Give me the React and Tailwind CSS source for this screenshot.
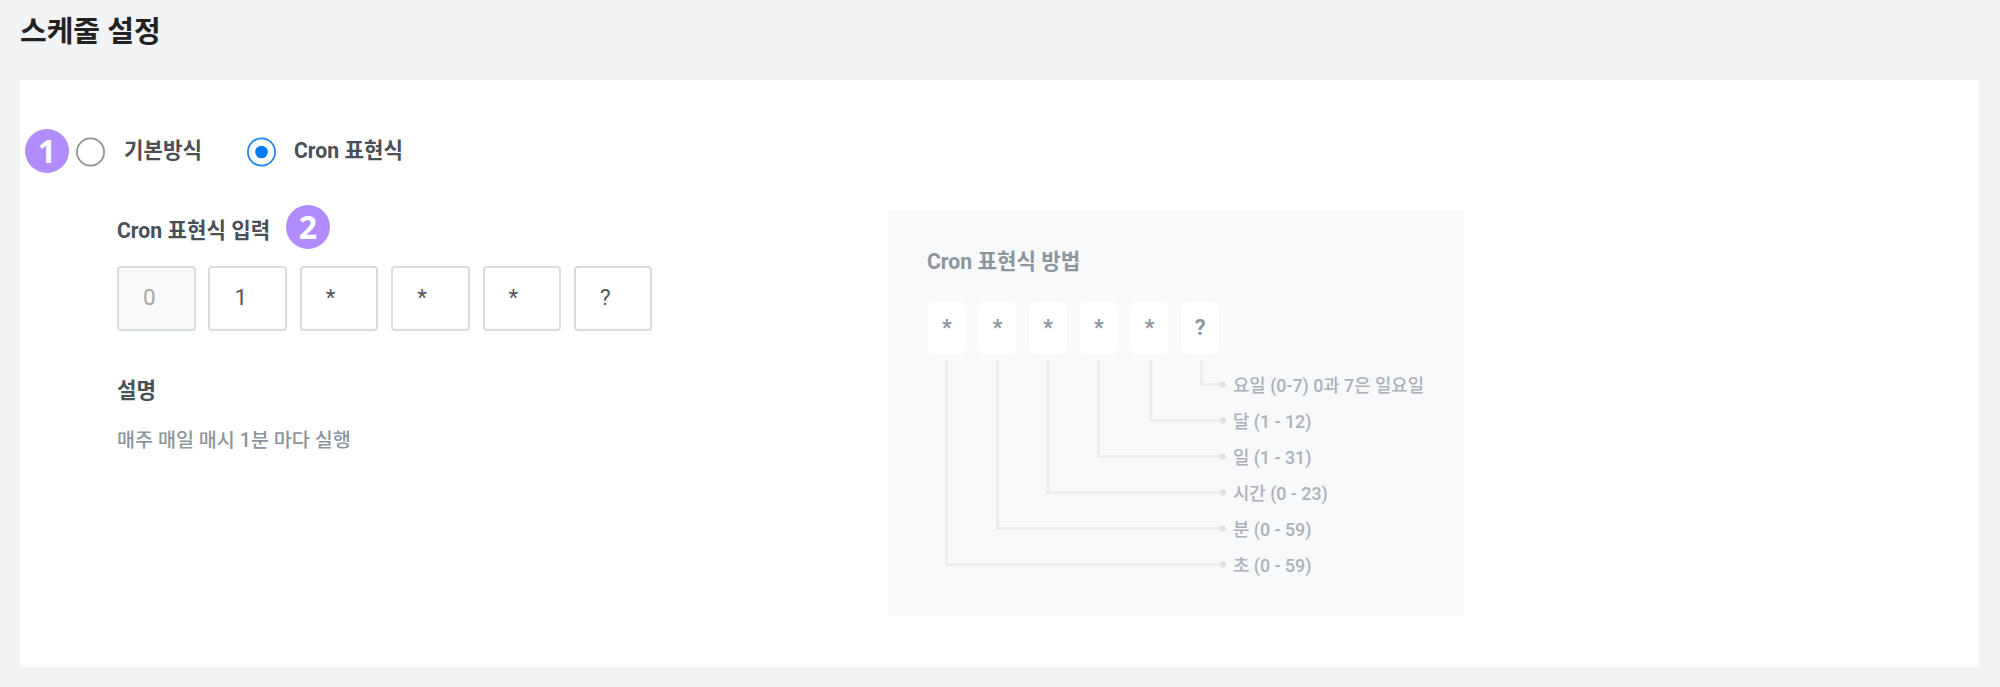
const cronFields = ['0', '1', '*', '*', '*', '?'];
const guideTiles = ['*', '*', '*', '*', '*', '?'];
const guideLabels = [
  '요일 (0-7) 0과 7은 일요일',
  '달 (1 - 12)',
  '일 (1 - 31)',
  '시간 (0 - 23)',
  '분 (0 - 59)',
  '초 (0 - 59)',
];
const connectors = [
  { x: 274.5, y: 25.5 },
  { x: 224, y: 61.5 },
  { x: 171.5, y: 97.5 },
  { x: 121, y: 133.5 },
  { x: 70.5, y: 169.5 },
  { x: 19.5, y: 205.5 },
];

function Badge({ children, className }) {
  return (
    <span
      className={`flex h-11 w-11 shrink-0 items-center justify-center rounded-full bg-[#b08cff] font-['Open_Sans','Noto_Sans',sans-serif] text-[32px] leading-none font-bold text-white ${className}`}
    >
      {children}
    </span>
  );
}

function Radio({ checked }) {
  return (
    <svg className="mt-[2px] h-[30px] w-[30px] shrink-0" viewBox="0 0 30 30" fill="none">
      <circle cx="15.5" cy="15" r="13.6" stroke={checked ? '#1f87ff' : '#929292'} strokeWidth="1.8" />
      {checked && <circle cx="15.5" cy="15" r="6.3" fill="#007bff" />}
    </svg>
  );
}

function CronForm() {
  return (
    <div className="w-[771px]">
      <div className="flex h-[38px] items-center gap-[17px]">
        <h2 className="mt-[2px] w-[152px] text-[21.2px] leading-[38px] font-bold whitespace-nowrap text-[#495057]">
          Cron 표현식 입력
        </h2>
        <Badge className="-mt-[6px]">2</Badge>
      </div>
      <div className="mt-[17px] flex gap-[12.9px]">
        {cronFields.map((value, i) => (
          <div
            key={i}
            className={`flex h-[65px] w-[78.5px] items-center rounded-[4px] border-2 border-[#d8dde2] pl-[24px] text-[22.5px] leading-none ${
              i === 0 ? 'bg-[#f8f9fb] text-[#a5a5a5]' : 'bg-white text-[#555555]'
            }`}
          >
            <span className="-mt-[2px]">{value}</span>
          </div>
        ))}
      </div>
      <h3 className="mt-[44px] text-[21.2px] leading-[32px] font-bold text-[#495057]">설명</h3>
      <p className="mt-[19px] text-[19.6px] leading-[30px] font-medium text-[#8e959c]">매주 매일 매시 1분 마다 실행</p>
    </div>
  );
}

function CronGuide() {
  return (
    <div className="h-[404px] w-[576px] bg-[#f8f9fb] pt-[32px] pl-[39px]">
      <h2 className="text-[21.2px] leading-[38px] font-bold text-[#8e969d]">Cron 표현식 방법</h2>
      <div className="mt-[21px] ml-[1px] flex gap-[13.3px]">
        {guideTiles.map((value, i) => (
          <div
            key={i}
            className="flex h-[52px] w-[37.4px] items-center justify-center rounded-md bg-white text-[22px] leading-none font-bold text-[#8e969d]"
          >
            {value}
          </div>
        ))}
      </div>
      <div className="mt-[5px] flex">
        <svg className="h-[212px] w-[306px] shrink-0" viewBox="0 0 306 212" fill="none">
          {connectors.map(({ x, y }) => (
            <g key={y}>
              <path d={`M${x} 1V${y}H296`} stroke="#e9ebed" strokeWidth="2.4" />
              <circle cx="296" cy={y} r="3.1" fill="#dee2e6" />
            </g>
          ))}
        </svg>
        <ul className="mt-[8px]">
          {guideLabels.map((label) => (
            <li key={label} className="h-9 text-[17.8px] leading-[37px] font-medium whitespace-nowrap text-[#acb1b7]">
              {label}
            </li>
          ))}
        </ul>
      </div>
    </div>
  );
}

export default function App() {
  return (
    <div className="h-[687px] w-[2000px] overflow-hidden bg-[#f1f3f5] px-5 font-['Roboto','Noto_Sans_CJK_KR',sans-serif]">
      <h1 className="h-20 text-[29px] leading-[65px] font-bold text-[#222222]">스케줄 설정</h1>
      <main className="h-[587px] w-[1959px] bg-white">
        <div className="flex h-[131px] items-center pt-[11px] pl-[5px] text-[21.2px] font-bold text-[#495057]">
          <Badge>1</Badge>
          <label className="ml-[6px] flex items-center gap-[19px]">
            <Radio />
            <span className="w-[78px] whitespace-nowrap">기본방식</span>
          </label>
          <label className="ml-[44px] flex items-center gap-[18px]">
            <Radio checked />
            <span className="whitespace-nowrap">Cron 표현식</span>
          </label>
        </div>
        <div className="flex pl-[97px]">
          <CronForm />
          <CronGuide />
        </div>
      </main>
    </div>
  );
}
